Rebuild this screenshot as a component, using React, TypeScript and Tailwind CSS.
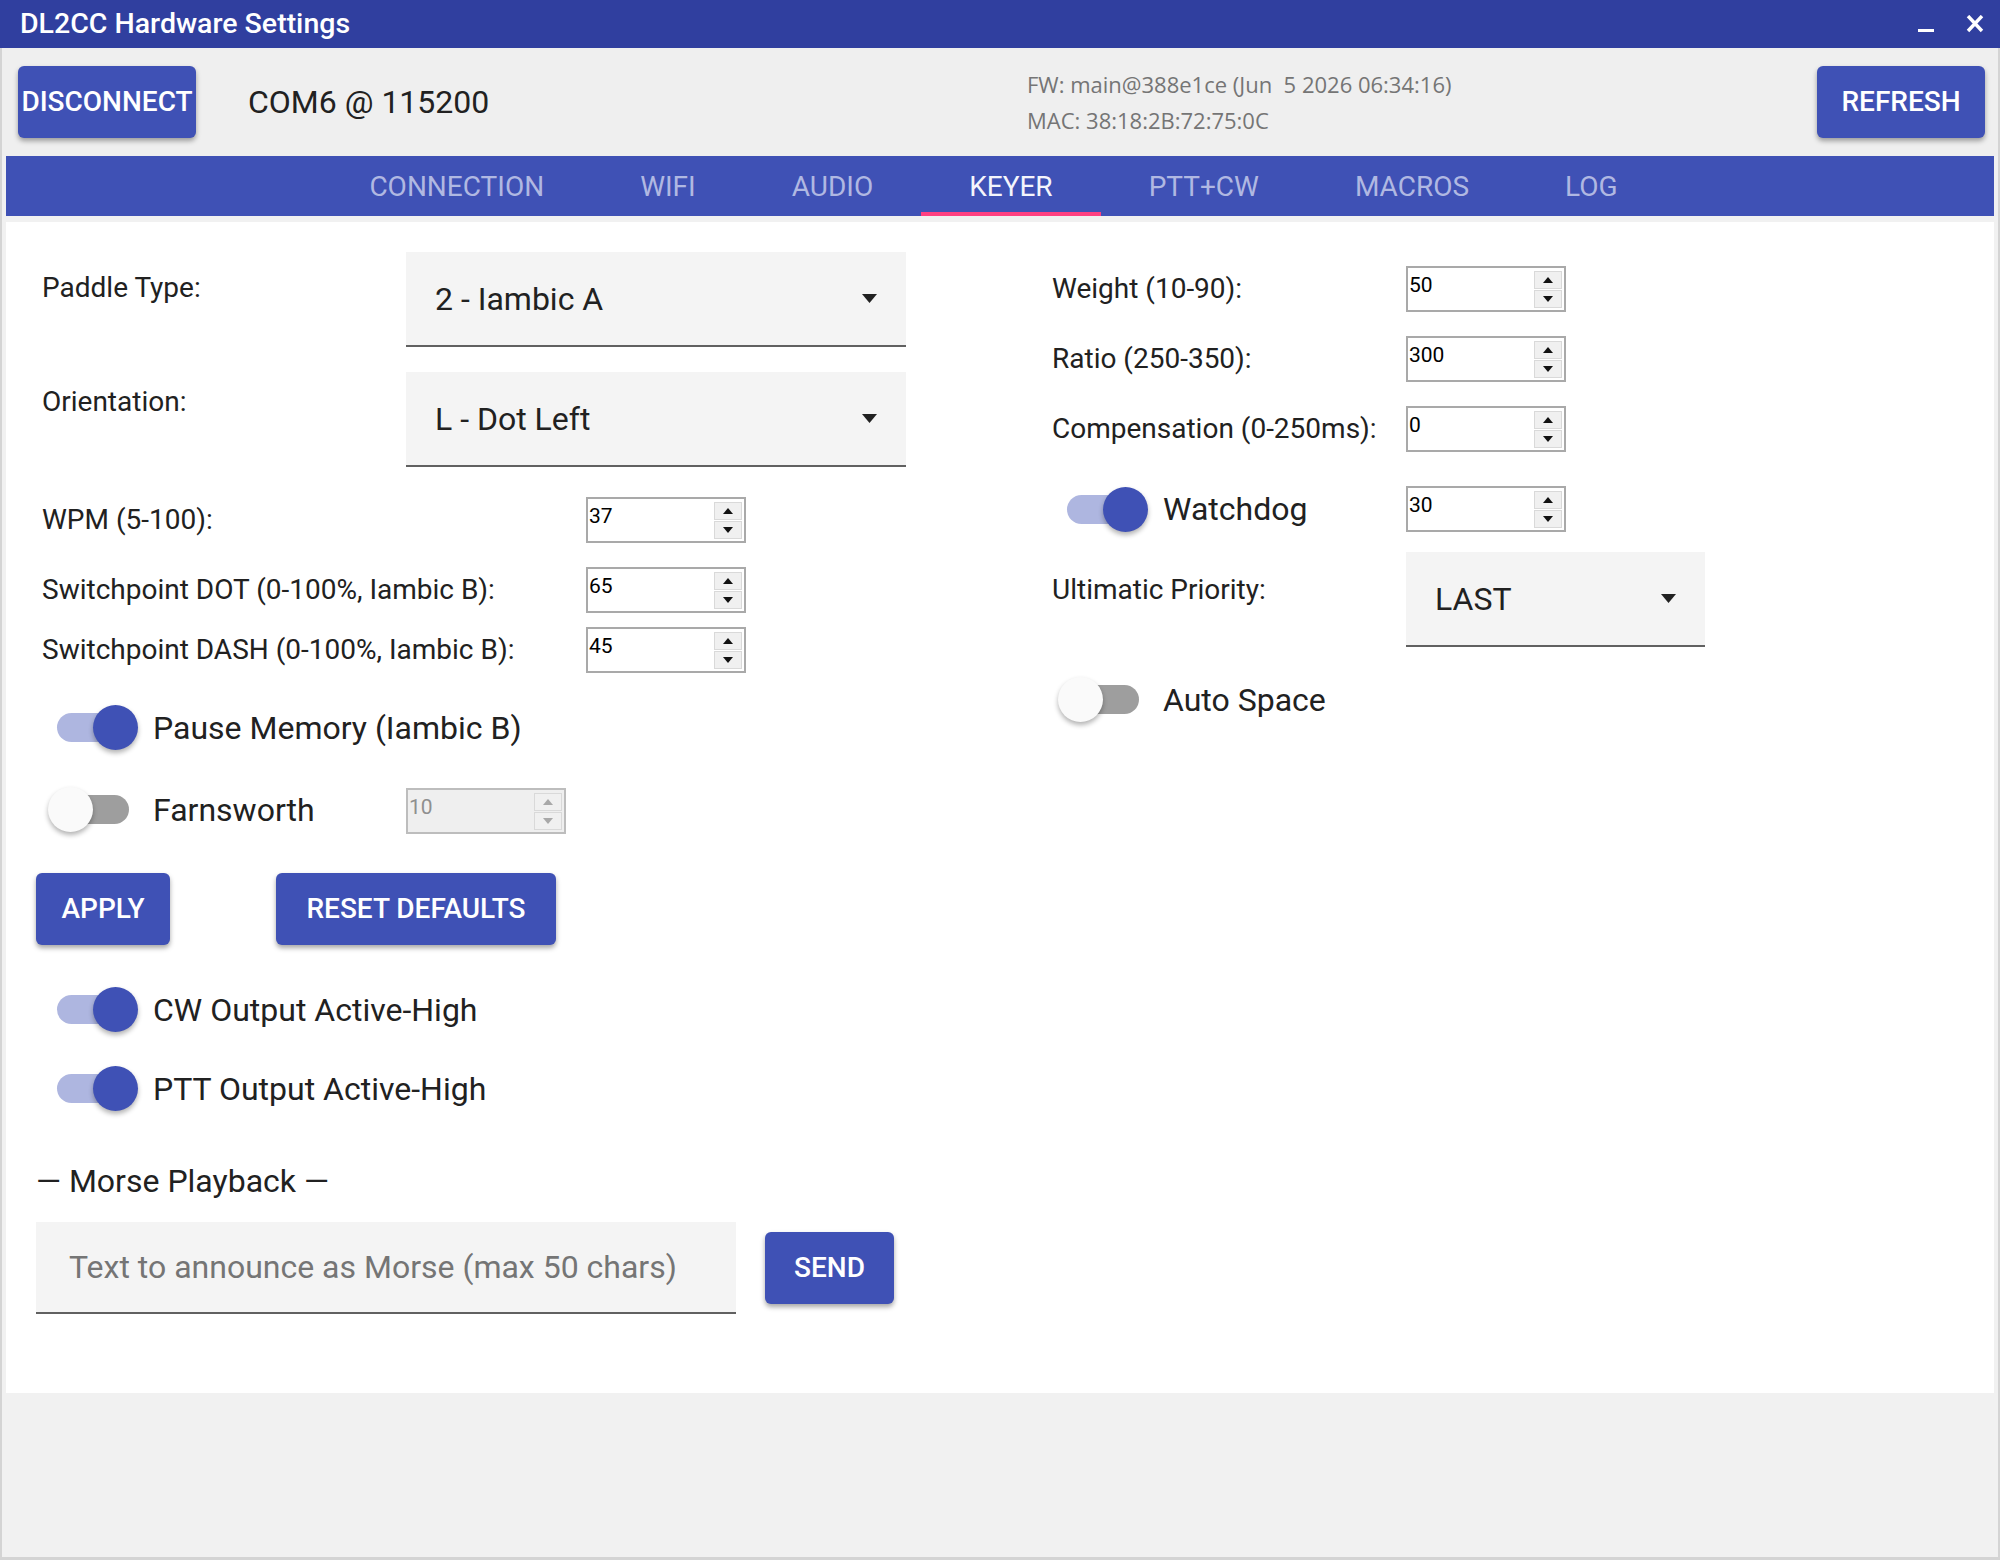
import React from "react";

const Tri = ({ up, color }: { up?: boolean; color: string }) => (
  <svg width="10" height="6" viewBox="0 0 10 6">
    <polygon points={up ? "5,0 10,6 0,6" : "0,0 10,0 5,6"} fill={color} />
  </svg>
);

function Spin({ value, disabled }: { value: string; disabled?: boolean }) {
  const c = disabled ? "#a8a8a8" : "#111111";
  return (
    <div
      className={`flex h-[46px] w-[160px] border-2 ${
        disabled ? "border-[#bdbdbd] bg-[#efefef]" : "border-[#a9a9a9] bg-white"
      }`}
    >
      <div
        className={`flex-1 pl-[1px] pt-[4px] text-[21px] leading-[26px] ${
          disabled ? "text-[#8f8f8f]" : "text-black"
        }`}
      >
        {value}
      </div>
      <div className="mr-[2px] flex flex-col justify-center gap-[1px]">
        <div className="flex h-[18px] w-[28px] items-center justify-center border border-[#d9d9d9] bg-[#f0f0f0]">
          <Tri up color={c} />
        </div>
        <div className="flex h-[18px] w-[28px] items-center justify-center border border-[#d9d9d9] bg-[#f0f0f0]">
          <Tri color={c} />
        </div>
      </div>
    </div>
  );
}

function Switch({ on }: { on: boolean }) {
  return (
    <div className="relative h-[45px] w-[90px] shrink-0">
      <div
        className={`absolute left-[9px] top-[8px] h-[29px] w-[72px] rounded-full ${
          on ? "bg-[#aeb6e0]" : "bg-[#9e9e9e]"
        }`}
      />
      <div
        className={`absolute top-0 h-[45px] w-[45px] rounded-full shadow-[0_3px_5px_rgba(0,0,0,0.3)] ${
          on ? "left-[45px] bg-[#3f51b5]" : "left-0 bg-[#fafafa]"
        }`}
      />
    </div>
  );
}

function Select({ value, w }: { value: string; w: string }) {
  return (
    <div
      className={`flex h-[95px] ${w} items-center justify-between border-b-2 border-[#616161] bg-[#f4f4f4] px-[29px]`}
    >
      <span className="text-[32px] leading-[38px] text-[#212121]">{value}</span>
      <svg width="15" height="9" viewBox="0 0 15 9">
        <polygon points="0,0 15,0 7.5,9" fill="#212121" />
      </svg>
    </div>
  );
}

function Btn({ children, cls }: { children: React.ReactNode; cls: string }) {
  return (
    <div
      className={`flex items-center justify-center rounded-[6px] bg-[#3f51b5] text-[28px] font-medium leading-none text-white shadow-[0_3px_5px_rgba(0,0,0,0.35)] ${cls}`}
    >
      {children}
    </div>
  );
}

const Label = ({ children, w }: { children: React.ReactNode; w: string }) => (
  <div className={`${w} shrink-0 text-[28px] leading-[34px] text-[#212121]`}>{children}</div>
);

export default function App() {
  const tabs = ["CONNECTION", "WIFI", "AUDIO", "KEYER", "PTT+CW", "MACROS", "LOG"];
  return (
    <div className="flex h-[1560px] w-[2000px] flex-col overflow-hidden bg-[#f1f1f1] font-['Roboto',sans-serif]">
      {/* Title bar */}
      <div className="flex h-[48px] shrink-0 items-center bg-[#303f9f] pl-[20px] pr-[16px]">
        <div className="text-[28.5px] font-medium leading-none text-white">DL2CC Hardware Settings</div>
        <div className="ml-auto flex items-center">
          <svg width="16" height="18" viewBox="0 0 16 18">
            <rect x="0" y="14" width="16" height="3" fill="white" />
          </svg>
          <svg className="ml-[32px]" width="18" height="18" viewBox="0 0 18 18">
            <path d="M2 1 L16 16 M16 1 L2 16" stroke="white" strokeWidth="3.4" />
          </svg>
        </div>
      </div>

      {/* Window body */}
      <div className="flex flex-1 flex-col border-x-2 border-b-[3px] border-[#d4d4d4] bg-[#f1f1f1]">
        {/* Header */}
        <div className="flex h-[108px] shrink-0 items-center bg-[#efefef] pl-[16px] pr-[13px]">
          <Btn cls="h-[72px] w-[178px]">DISCONNECT</Btn>
          <div className="ml-[52px] w-[779px] text-[32px] leading-none text-[#212121]">COM6 @ 115200</div>
          <div className="flex flex-col gap-[11px] pt-[1px] font-['Open_Sans',sans-serif] text-[22px] leading-[25px] text-[#757575]">
            <div className="whitespace-pre">FW: main@388e1ce (Jun  5 2026 06:34:16)</div>
            <div>MAC: 38:18:2B:72:75:0C</div>
          </div>
          <div className="ml-auto">
            <Btn cls="h-[72px] w-[168px]">REFRESH</Btn>
          </div>
        </div>

        {/* Tabs */}
        <div className="mx-[4px] flex h-[60px] shrink-0 justify-center bg-[#3f51b5] pr-[13px]">
          {tabs.map((t) => (
            <div
              key={t}
              className={`flex h-full flex-col ${t === "KEYER" ? "text-[#f4f5fc]" : "text-[#b0b8e2]"}`}
            >
              <div className="flex flex-1 items-center px-[48px] pt-[6px] text-[28px] leading-none">{t}</div>
              <div className={`h-[4px] w-full ${t === "KEYER" ? "bg-[#ff4081]" : "bg-transparent"}`} />
            </div>
          ))}
        </div>

        {/* Content panel */}
        <div className="mx-[4px] mt-[6px] flex h-[1171px] shrink-0 bg-white pl-[30px]">
          {/* Left column */}
          <div className="flex w-[1010px] shrink-0 flex-col">
            <div className="mt-[30px] flex">
              <div className="ml-[6px] mt-[19px] w-[364px] text-[28px] leading-[34px] text-[#212121]">Paddle Type:</div>
              <Select value="2 - Iambic A" w="w-[500px]" />
            </div>
            <div className="mt-[25px] flex">
              <div className="ml-[6px] mt-[13px] w-[364px] text-[28px] leading-[34px] text-[#212121]">Orientation:</div>
              <Select value="L - Dot Left" w="w-[500px]" />
            </div>
            <div className="mt-[30px] flex items-center">
              <div className="ml-[6px]">
                <Label w="w-[544px]">WPM (5-100):</Label>
              </div>
              <Spin value="37" />
            </div>
            <div className="mt-[24px] flex items-center">
              <div className="ml-[6px]">
                <Label w="w-[544px]">Switchpoint DOT (0-100%, Iambic B):</Label>
              </div>
              <Spin value="65" />
            </div>
            <div className="mt-[14px] flex items-center">
              <div className="ml-[6px]">
                <Label w="w-[544px]">Switchpoint DASH (0-100%, Iambic B):</Label>
              </div>
              <Spin value="45" />
            </div>
            <div className="ml-[12px] mt-[32px] flex items-center">
              <Switch on />
              <div className="ml-[15px] text-[32px] leading-[38px] text-[#212121]">Pause Memory (Iambic B)</div>
            </div>
            <div className="ml-[12px] mt-[35px] flex h-[49px] items-center">
              <Switch on={false} />
              <div className="ml-[15px] w-[253px] text-[32px] leading-[38px] text-[#212121]">Farnsworth</div>
              <div className="mt-[3px] self-start">
                <Spin value="10" disabled />
              </div>
            </div>
            <div className="mt-[39px] flex">
              <Btn cls="h-[72px] w-[134px]">APPLY</Btn>
              <Btn cls="ml-[106px] h-[72px] w-[280px]">RESET DEFAULTS</Btn>
            </div>
            <div className="ml-[12px] mt-[42px] flex items-center">
              <Switch on />
              <div className="ml-[15px] text-[32px] leading-[38px] text-[#212121]">CW Output Active-High</div>
            </div>
            <div className="ml-[12px] mt-[34px] flex items-center">
              <Switch on />
              <div className="ml-[15px] text-[32px] leading-[38px] text-[#212121]">PTT Output Active-High</div>
            </div>
            <div className="mt-[51px] text-[32px] leading-[38px] text-[#212121]">— Morse Playback —</div>
            <div className="mt-[22px] flex items-start">
              <div className="flex h-[92px] w-[700px] items-center border-b-2 border-[#616161] bg-[#f4f4f4] pl-[33px]">
                <span className="text-[32px] leading-[38px] text-[#757575]">Text to announce as Morse (max 50 chars)</span>
              </div>
              <Btn cls="ml-[29px] mt-[10px] h-[72px] w-[129px]">SEND</Btn>
            </div>
          </div>

          {/* Right column */}
          <div className="flex flex-col">
            <div className="mt-[44px] flex items-center">
              <div className="ml-[6px]">
                <Label w="w-[354px]">Weight (10-90):</Label>
              </div>
              <Spin value="50" />
            </div>
            <div className="mt-[24px] flex items-center">
              <div className="ml-[6px]">
                <Label w="w-[354px]">Ratio (250-350):</Label>
              </div>
              <Spin value="300" />
            </div>
            <div className="mt-[24px] flex items-center">
              <div className="ml-[6px]">
                <Label w="w-[354px]">Compensation (0-250ms):</Label>
              </div>
              <Spin value="0" />
            </div>
            <div className="mt-[34px] flex items-center">
              <div className="ml-[12px] flex w-[348px] items-center">
                <Switch on />
                <div className="ml-[15px] text-[32px] leading-[38px] text-[#212121]">Watchdog</div>
              </div>
              <Spin value="30" />
            </div>
            <div className="mt-[20px] flex">
              <div className="ml-[6px] mt-[21px] w-[354px] text-[28px] leading-[34px] text-[#212121]">Ultimatic Priority:</div>
              <Select value="LAST" w="w-[299px]" />
            </div>
            <div className="ml-[12px] mt-[30px] flex items-center">
              <Switch on={false} />
              <div className="ml-[15px] text-[32px] leading-[38px] text-[#212121]">Auto Space</div>
            </div>
          </div>
        </div>
      </div>
    </div>
  );
}
